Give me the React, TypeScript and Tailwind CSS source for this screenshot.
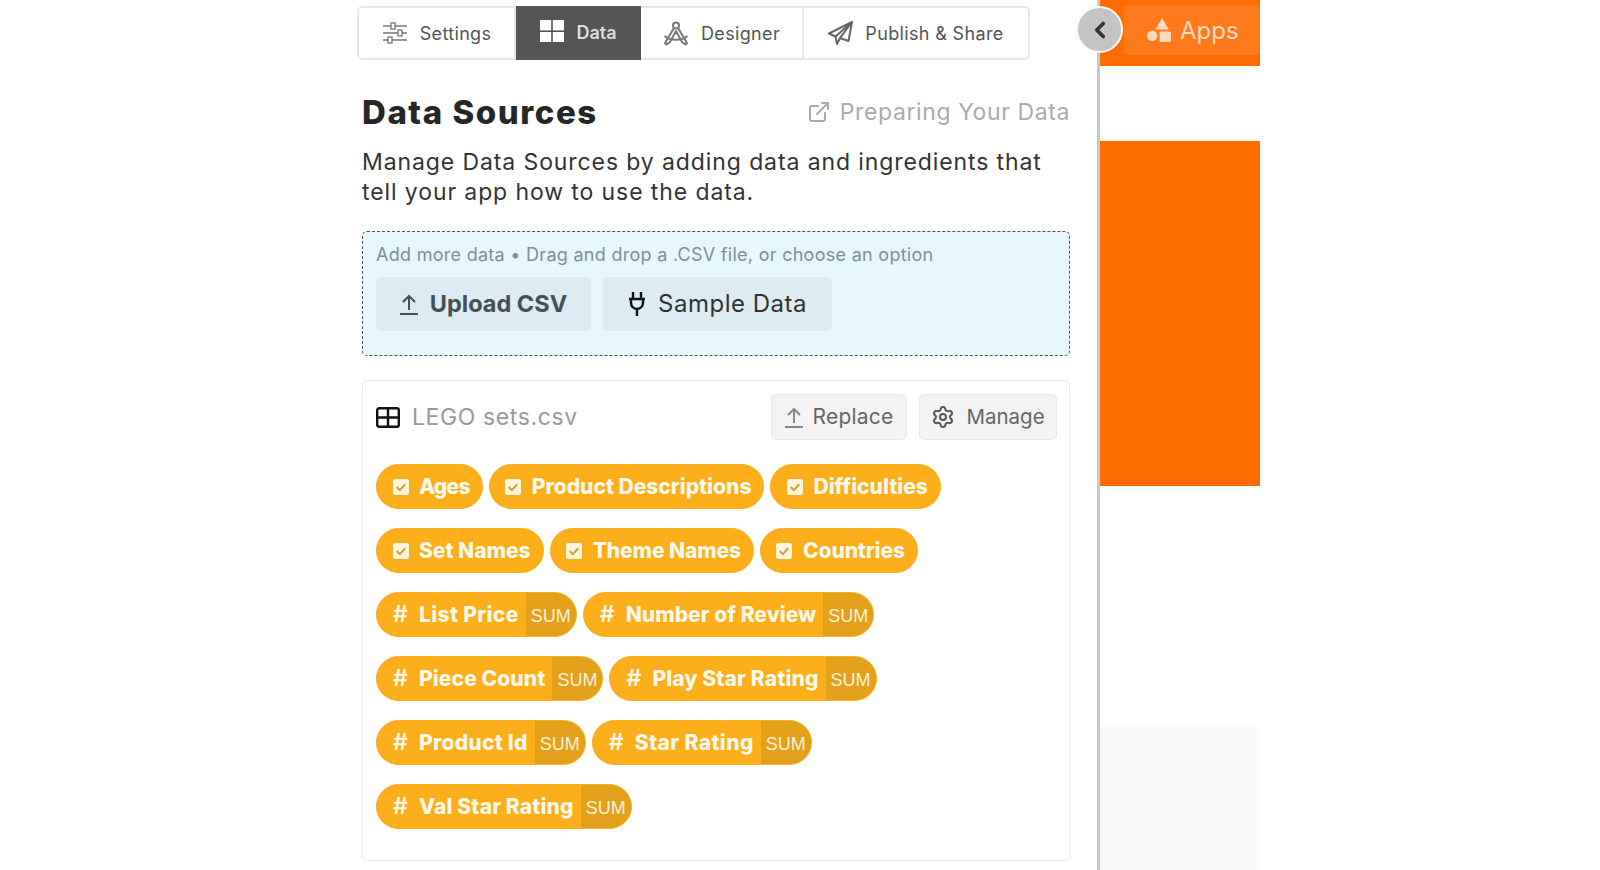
import { ChevronLeft, ExternalLink, Settings as Gear } from 'lucide-react';

const TEXT_PILLS = [
  ['Ages', 'Product Descriptions', 'Difficulties'],
  ['Set Names', 'Theme Names', 'Countries'],
];

const NUM_PILLS = [
  ['List Price', 'Number of Review'],
  ['Piece Count', 'Play Star Rating'],
  ['Product Id', 'Star Rating'],
  ['Val Star Rating'],
];

// the fallback font runs a little wide or narrow on some labels
const LABEL_TRACKING: Record<string, string> = {
  Ages: 'tracking-[-0.7px]',
  'Theme Names': 'tracking-[-0.1px]',
  Countries: 'tracking-[-0.1px]',
  'List Price': 'tracking-[0.35px]',
  'Product Id': 'tracking-[0.25px]',
  'Piece Count': 'tracking-[0.1px]',
  'Number of Review': 'tracking-[0.05px]',
  'Play Star Rating': 'tracking-[0.15px]',
  'Star Rating': 'tracking-[0.4px]',
  'Val Star Rating': 'tracking-[0.15px]',
};

function SlidersIcon() {
  return (
    <svg width="26" height="22" viewBox="0 0 26 22" fill="none" stroke="#777" strokeWidth="1.3">
      <path d="M1 4h8M13 4h12M1 11h15M20 11h5M1 18h5M10 18h15" />
      <rect x="9" y="1" width="4" height="6" />
      <rect x="16" y="8" width="4" height="6" />
      <rect x="6" y="15" width="4" height="6" />
    </svg>
  );
}

function GridIcon() {
  return (
    <svg width="24" height="22" viewBox="0 0 24 22" fill="#fff">
      <rect x="0" y="0" width="11.2" height="10.4" />
      <rect x="12.8" y="0" width="11.2" height="10.4" />
      <rect x="0" y="12" width="11.2" height="10" />
      <rect x="12.8" y="12" width="11.2" height="10" />
    </svg>
  );
}

function CompassIcon() {
  return (
    <svg width="26" height="25" viewBox="0 0 26 25" fill="none" stroke="#777" strokeWidth="2" strokeLinejoin="round">
      <circle cx="13" cy="4.5" r="3" />
      <path d="M11 7 2 22l1.5 1.5L7 21 13 10l6 11 3.5 2.5L24 22 15 7" />
      <path d="M1.5 15c6 5 17 5 23 0" />
    </svg>
  );
}

function PlaneIcon() {
  return (
    <svg width="25" height="24" viewBox="0 0 25 24" fill="none" stroke="#666" strokeWidth="2" strokeLinejoin="round">
      <path d="M24 1 1 12.5l6.5 3L24 1ZM24 1 20.5 20 12 17l-3 6-1.5-7.5M12 17 24 1" />
    </svg>
  );
}

function ShapesIcon() {
  return (
    <svg width="26" height="25" viewBox="0 0 25 24" fill="#fdd9bd">
      <path d="M14.5 0 21 11H8Z" />
      <circle cx="5" cy="17" r="5" />
      <rect x="12" y="13" width="11" height="10" rx="1" />
    </svg>
  );
}

function UploadIcon({ color }: { color: string }) {
  return (
    <svg width="18" height="21" viewBox="0 0 18 21" fill="none" stroke={color} strokeWidth="2">
      <path d="M9 16V2M3 8l6-6 6 6M0 20h18" />
    </svg>
  );
}

function PlugIcon() {
  return (
    <svg width="18" height="24" viewBox="0 0 18 24" fill="none" stroke="#111" strokeWidth="2.4">
      <path d="M5 0v7M13 0v7M1 7h16M3 7v4a6 6 0 0 0 12 0V7M9 17v7" />
    </svg>
  );
}

function TableIcon() {
  return (
    <svg width="24" height="21" viewBox="0 0 24 21" fill="none" stroke="#111" strokeWidth="2.4">
      <rect x="1.2" y="1.2" width="21.6" height="18.6" rx="2" />
      <path d="M1.2 10.5h21.6M12 1.2v18.6" />
    </svg>
  );
}

function CheckIcon() {
  return (
    <svg width="16" height="16" viewBox="0 0 17 17">
      <rect x="0" y="0" width="17" height="17" rx="2.5" fill="#fff5e0" />
      <path d="M4 8.5 7.2 11.8 13 5.5" fill="none" stroke="#dd9c2a" strokeWidth="2.2" />
    </svg>
  );
}

function Tab({ icon, label, w }: { icon: React.ReactNode; label: string; w: string }) {
  return (
    <div className={`${w} flex items-center justify-center gap-3 border-r-2 border-[#e8e8e8] last:border-r-0 text-[18px] tracking-[0.35px] text-[#555]`}>
      {icon}
      <span>{label}</span>
    </div>
  );
}

function Pill({ label, check }: { label: string; check?: boolean }) {
  return (
    <div className="h-[45px] flex items-center rounded-full border border-[#fdae1b] bg-[#fdae1b] text-[#fff8ea] overflow-hidden">
      <div className="w-[17px] ml-[15px] flex justify-center">
        {check ? <CheckIcon /> : <span className="text-[23px] font-semibold leading-none">#</span>}
      </div>
      <span className={`ml-[10px] text-[21px] font-extrabold ${LABEL_TRACKING[label] ?? ''} ${check ? 'mr-[12px]' : 'mr-[7px]'}`}>{label}</span>
      {!check && (
        <span className="h-full flex items-center pt-[3px] pl-[5px] pr-[5px] bg-[#e3a01b] text-[18px] text-[#fdf0d8] font-['Liberation_Sans',sans-serif]">
          SUM
        </span>
      )}
    </div>
  );
}

export default function App() {
  return (
    <div className="h-[870px] w-[1600px] overflow-hidden flex bg-white font-['Inter',sans-serif]">
      <main className="ml-[362px] w-[708px] flex flex-col shrink-0">
        <div className="mt-[6px] -ml-[5px] w-[673px] h-[54px] flex border-2 border-[#e8e8e8] rounded-[5px] bg-white">
          <Tab w="w-[157px]" icon={<SlidersIcon />} label="Settings" />
          <div className="w-[125px] -my-[2px] flex items-center justify-center gap-3 bg-[#555] text-[18px] font-semibold text-[#ddd]">
            <span className="-mt-[5px]"><GridIcon /></span>
            <span className="-mt-[2px]">Data</span>
          </div>
          <Tab w="w-[163px]" icon={<CompassIcon />} label="Designer" />
          <Tab w="w-[224px]" icon={<PlaneIcon />} label="Publish & Share" />
        </div>

        <div className="mt-[30px] flex items-center justify-between">
          <h1 className="text-[33px] leading-[44px] font-extrabold tracking-[1.55px] text-[#262626]">Data Sources</h1>
          <div className="flex items-center gap-[9px] text-[23px] tracking-[0.6px] text-[#aaa]">
            <ExternalLink size={24} strokeWidth={2} />
            <span>Preparing Your Data</span>
          </div>
        </div>

        <p className="mt-[13px] text-[23px] leading-[30px] tracking-[0.9px] text-[#333]">
          Manage Data Sources by adding data and ingredients that tell your app how to use the data.
        </p>

        <div className="mt-[24px] h-[125px] border border-dashed border-[#555] rounded-[5px] bg-[#e6f7fd] px-[13px] pt-[11px]">
          <div className="text-[18px] leading-[24px] tracking-[0.28px] text-[#7f8f96]">
            Add more data • Drag and drop a .CSV file, or choose an option
          </div>
          <div className="mt-[10px] flex gap-3">
            <button className="w-[215px] h-[54px] rounded-[5px] bg-[#dcecf2] flex items-center justify-center gap-3 text-[23.5px] font-bold text-[#454f54]">
              <UploadIcon color="#454f54" />
              Upload CSV
            </button>
            <button className="w-[229px] h-[54px] rounded-[5px] bg-[#dcecf2] flex items-center justify-center gap-3 text-[24px] tracking-[0.5px] text-[#333]">
              <PlugIcon />
              Sample Data
            </button>
          </div>
        </div>

        <section className="mt-[24px] h-[481px] shrink-0 border border-[#e8e8e8] rounded-[5px] pl-[13px] pr-[12px] pt-[13px]">
          <div className="flex items-center">
            <TableIcon />
            <span className="ml-[12px] text-[23px] tracking-[0.6px] text-[#999]">LEGO sets.csv</span>
            <button className="ml-auto w-[136px] h-[46px] rounded-[5px] border border-[#e8e8e8] bg-[#f3f3f3] flex items-center justify-center gap-[10px] text-[21px] tracking-[0.2px] text-[#666]">
              <UploadIcon color="#888" />
              Replace
            </button>
            <button className="ml-3 w-[138px] h-[46px] rounded-[5px] border border-[#e8e8e8] bg-[#f3f3f3] flex items-center justify-center gap-[11px] text-[20.5px] text-[#666]">
              <Gear size={24} strokeWidth={2} color="#555" />
              Manage
            </button>
          </div>
          <div className="mt-[24px] flex flex-col gap-[19px]">
            {TEXT_PILLS.map((row, i) => (
              <div key={i} className="flex gap-[6px]">
                {row.map(label => <Pill key={label} label={label} check />)}
              </div>
            ))}
            {NUM_PILLS.map((row, i) => (
              <div key={i} className="flex gap-[6px]">
                {row.map(label => <Pill key={label} label={label} />)}
              </div>
            ))}
          </div>
        </section>
      </main>

      <aside className="relative ml-[27px] w-[163px] border-l-[3px] border-[#c8c8c8] flex flex-col shrink-0">
        <div className="h-[66px] bg-[#ff6c02] pl-[24px] pt-[5px]">
          <div className="h-[50px] w-[136px] rounded-[4px] bg-[#ff7a1c] flex items-center gap-[7px] pl-[23px] text-[24px] text-[#fdd9bd]">
            <ShapesIcon />
            <span className="mt-[1px]">Apps</span>
          </div>
        </div>
        <div className="h-[75px]" />
        <div className="h-[345px] bg-[#ff6c02]" />
        <div className="h-[241px]" />
        <div className="flex-1 bg-[#f9f9f9]" />
        <div className="absolute -left-[24px] top-[6px] w-[47px] h-[47px] rounded-full bg-[#c4c4c4] border-[2px] border-[#fff8ee] flex items-center justify-center">
          <ChevronLeft size={26} strokeWidth={3.5} color="#333" />
        </div>
      </aside>
    </div>
  );
}
